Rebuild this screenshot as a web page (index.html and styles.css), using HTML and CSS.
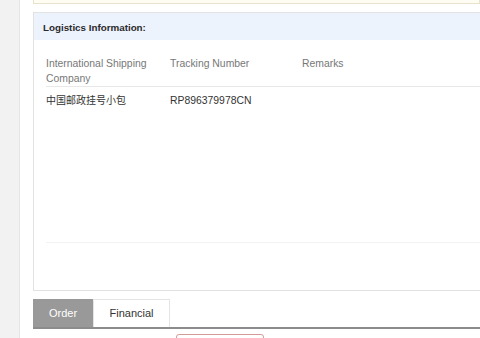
FILE: index.html
```html
<!DOCTYPE html>
<html>
<head>
<meta charset="utf-8">
<link rel="stylesheet" href="styles.css">
</head>
<body>
<div class="layout">
  <div class="sidebar"></div>
  <div class="main">
    <div class="notice"></div>
    <div class="panel">
      <div class="panel-head">Logistics Information:</div>
      <div class="panel-body">
        <table class="grid">
          <thead>
            <tr>
              <th class="c1">International Shipping Company</th>
              <th class="c2">Tracking Number</th>
              <th class="c3">Remarks</th>
            </tr>
          </thead>
          <tbody>
            <tr>
              <td><span class="cjk">中国邮政挂号小包</span></td>
              <td>RP896379978CN</td>
              <td></td>
            </tr>
          </tbody>
        </table>
        <div class="rule"></div>
      </div>
    </div>
    <div class="tabs">
      <div class="tab active">Order</div>
      <div class="tab">Financial</div>
    </div>
    <div class="actions">
      <div class="btn"></div>
    </div>
  </div>
</div>
</body>
</html>
```
FILE: styles.css
```css
html, body {
  margin: 0;
  padding: 0;
  background: #fff;
  font-family: "Liberation Sans", Arial, "Noto Sans CJK SC", sans-serif;
  font-size: 10.4px;
  color: #333;
}
.layout {
  display: flex;
  height: 338px;
  overflow: hidden;
}
.sidebar {
  width: 19px;
  flex: none;
  background: #f2f2f2;
  border-right: 1px solid #e6e6e6;
}
.main {
  flex: 1;
  padding-left: 13px;
  min-width: 0;
}
.notice {
  height: 3px;
  background: #fffdf3;
  border: 1px solid #e8e3cc;
  border-top: none;
  margin-bottom: 8px;
}
.panel {
  border: 1px solid #e2e2e2;
  border-right: none;
  height: 279px;
  box-sizing: border-box;
  display: flex;
  flex-direction: column;
}
.panel-head {
  height: 27px;
  background: #edf3fd;
  font-weight: bold;
  font-size: 9.8px;
  color: #2a2a2a;
  line-height: 29px;
  padding-left: 9px;
}
.panel-body {
  padding: 14px 0 0 12px;
}
.grid {
  border-collapse: collapse;
  width: 100%;
}
.grid th {
  text-align: left;
  font-weight: normal;
  color: #777;
  line-height: 15px;
  vertical-align: top;
  padding: 2px 0 0 0;
  border-bottom: 1px solid #e8e8e8;
}
.grid th.c1 { width: 110px; padding-right: 14px; }
.grid th.c2 { width: 132px; }
.grid td {
  line-height: 15px;
  padding: 6px 0 9px 0;
  color: #333;
}
.cjk {
  font-size: 10px;
}
.rule {
  margin-top: 125px;
  height: 1px;
  background: #f2f2f2;
}
.tabs {
  display: flex;
  margin-top: 8px;
  border-bottom: 2px solid #8c8c8c;
  height: 28px;
}
.tab {
  font-size: 11px;
  line-height: 28px;
  text-align: center;
  box-sizing: border-box;
}
.tab.active {
  width: 60px;
  background: #999;
  color: #fff;
}
.tab:not(.active) {
  width: 77px;
  background: #fff;
  color: #333;
  border: 1px solid #e4e4e4;
  border-bottom: none;
  line-height: 27px;
}
.actions {
  padding: 5px 0 0 143px;
}
.btn {
  width: 86px;
  height: 12px;
  border: 1px solid #d49a9a;
  border-radius: 3px;
  background: #fff;
}
```
